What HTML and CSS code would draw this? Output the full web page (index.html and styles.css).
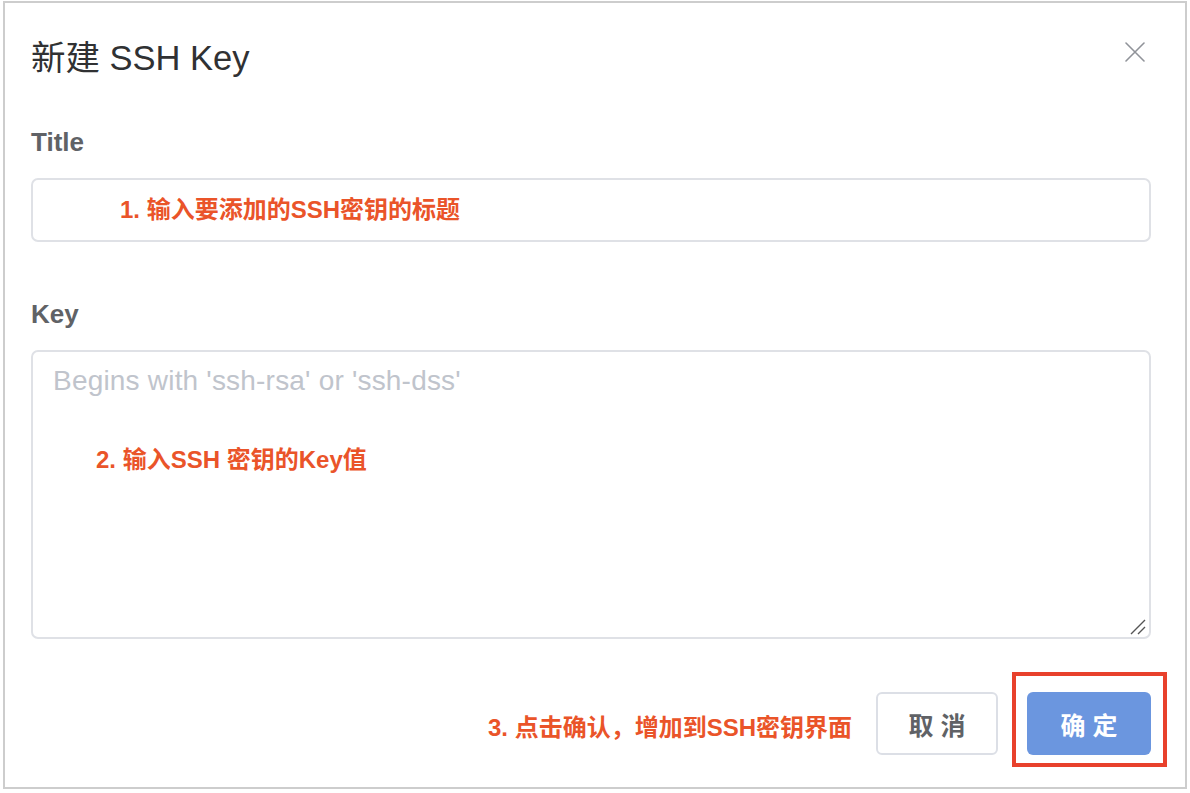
FILE: index.html
```html
<!DOCTYPE html>
<html lang="zh-CN">
<head>
<meta charset="utf-8">
<title>新建 SSH Key</title>
<link rel="stylesheet" href="styles.css">
</head>
<body>
<div class="frame">
  <div class="header">
    <div class="title">新建 SSH Key</div>
    <svg class="close" width="20" height="20" viewBox="0 0 20 20" aria-label="关闭">
      <path d="M1 1 L19 19 M19 1 L1 19" stroke="#909399" stroke-width="1.6" fill="none" stroke-linecap="round"/>
    </svg>
  </div>
  <div class="body">
    <div class="field">
      <div class="label">Title</div>
      <div class="input">
        <span class="note">1. 输入要添加的SSH密钥的标题</span>
      </div>
    </div>
    <div class="field">
      <div class="label">Key</div>
      <div class="textarea">
        <div class="placeholder">Begins with 'ssh-rsa' or 'ssh-dss'</div>
        <div class="note note-key">2. 输入SSH 密钥的Key值</div>
        <svg class="grip" width="16" height="16" viewBox="0 0 16 16">
          <path d="M1 15 L15 1 M8 15 L15 8" stroke="#555" stroke-width="1.4" fill="none"/>
        </svg>
      </div>
    </div>
  </div>
  <div class="footer">
    <span class="note note-footer">3. 点击确认，增加到SSH密钥界面</span>
    <button class="btn btn-cancel">取 消</button>
    <button class="btn btn-primary">确 定<span class="mark"></span></button>
  </div>
</div>
</body>
</html>
```
FILE: styles.css
```css
* { box-sizing: border-box; }
html, body {
  margin: 0;
  padding: 0;
  background: #fff;
}
body {
  font-family: "Liberation Sans", "Noto Sans CJK SC", sans-serif;
  color: #303133;
}
.frame {
  margin: 1px 0 0 3px;
  width: 1184px;
  height: 788px;
  border: 2px solid #cdcdcd;
  background: #fff;
  display: flex;
  flex-direction: column;
}
.header {
  display: flex;
  justify-content: space-between;
  align-items: flex-start;
  padding: 35px 40px 0 26px;
}
.title {
  font-size: 34.5px;
  line-height: 40px;
  color: #303133;
}
.close {
  margin-top: 4px;
  display: block;
}
.body {
  padding: 46px 34px 0 26px;
  display: flex;
  flex-direction: column;
  gap: 54px;
}
.field {
  display: flex;
  flex-direction: column;
  gap: 18px;
}
.label {
  font-size: 26px;
  line-height: 36px;
  font-weight: 700;
  color: #606266;
}
.input {
  height: 64px;
  border: 2px solid #dfe1e6;
  border-radius: 7px;
  display: flex;
  align-items: center;
  padding-left: 87px;
}
.note {
  font-family: "Liberation Sans", "Noto Sans CJK SC", sans-serif;
  font-size: 24px;
  line-height: 34px;
  font-weight: 600;
  color: #ea5429;
}
.textarea {
  position: relative;
  height: 289px;
  border: 2px solid #dfe1e6;
  border-radius: 7px;
  padding: 11px 20px 0 20px;
}
.placeholder {
  font-size: 28px;
  line-height: 36px;
  letter-spacing: 0.2px;
  color: #c0c4cc;
}
.note-key {
  margin: 44px 0 0 43px;
}
.grip {
  position: absolute;
  right: 3px;
  bottom: 2px;
}
.footer {
  margin-top: 53px;
  padding-right: 34px;
  display: flex;
  justify-content: flex-end;
  align-items: center;
}
.note-footer {
  margin-top: 8px;
  margin-right: 24px;
}
.btn {
  font-family: "Liberation Sans", "Noto Sans CJK SC", sans-serif;
  height: 63px;
  border-radius: 6px;
  font-size: 25px;
  font-weight: 700;
  padding: 0;
  cursor: pointer;
}
.btn-cancel {
  width: 122px;
  background: #fff;
  border: 2px solid #dcdfe6;
  color: #606266;
  margin-right: 29px;
}
.btn-primary {
  position: relative;
  width: 124px;
  background: #6b96df;
  border: 0;
  color: #fff;
}
.mark {
  position: absolute;
  top: -20px;
  left: -15px;
  right: -16px;
  bottom: -12px;
  border: 4px solid #e8412c;
  pointer-events: none;
}
```
